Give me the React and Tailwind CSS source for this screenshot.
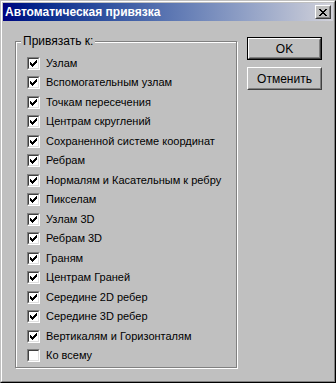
import React from 'react';

const items = [
  { label: 'Узлам', on: true, h: 'h-[20px]' },
  { label: 'Вспомогательным узлам', on: true, h: 'h-[19px]' },
  { label: 'Точкам пересечения', on: true, h: 'h-[20px]' },
  { label: 'Центрам скруглений', on: true, h: 'h-[19px]' },
  { label: 'Сохраненной системе координат', on: true, h: 'h-[20px]' },
  { label: 'Ребрам', on: true, h: 'h-[19px]' },
  { label: 'Нормалям и Касательным к ребру', on: true, h: 'h-[20px]' },
  { label: 'Пикселам', on: true, h: 'h-[19px]' },
  { label: 'Узлам 3D', on: true, h: 'h-[20px]' },
  { label: 'Ребрам 3D', on: true, h: 'h-[19px]' },
  { label: 'Граням', on: true, h: 'h-[20px]' },
  { label: 'Центрам Граней', on: true, h: 'h-[19px]' },
  { label: 'Середине 2D ребер', on: true, h: 'h-[20px]' },
  { label: 'Середине 3D ребер', on: true, h: 'h-[19px]' },
  { label: 'Вертикалям и Горизонталям', on: true, h: 'h-[20px]' },
  { label: 'Ко всему', on: false, h: 'h-[19px]' },
];

// classic 7x7 check glyph
const CHECK = [
  '......#',
  '.....##',
  '#...###',
  '##.###.',
  '#####..',
  '.###...',
  '..#....',
];

function CheckMark() {
  const rects = [];
  CHECK.forEach((row, y) => {
    row.split('').forEach((c, x) => {
      if (c === '#') rects.push(<rect key={`${x}-${y}`} x={x} y={y} width="1" height="1" />);
    });
  });
  return (
    <svg width="7" height="7" viewBox="0 0 7 7" className="block" shapeRendering="crispEdges" fill="#000">
      {rects}
    </svg>
  );
}

function Checkbox({ checked }) {
  return (
    <div className="w-[13px] h-[13px] shrink-0 border border-t-[#808080] border-l-[#808080] border-b-white border-r-white">
      <div className="w-full h-full border border-t-[#404040] border-l-[#404040] border-b-[#dfdfdf] border-r-[#dfdfdf] bg-white flex items-center justify-center">
        {checked && <CheckMark />}
      </div>
    </div>
  );
}

function Button({ children, isDefault }) {
  return (
    <div className={`w-[75px] h-[23px] ${isDefault ? 'border border-black' : ''}`}>
      <div className="w-full h-full border border-t-white border-l-white border-b-[#404040] border-r-[#404040]">
        <div className="w-full h-full border border-t-[#c0c0c0] border-l-[#c0c0c0] border-b-[#808080] border-r-[#808080] flex items-center justify-center text-[12px] text-black">
          {children}
        </div>
      </div>
    </div>
  );
}

export default function App() {
  return (
    <div
      className="w-[336px] h-[383px] border border-t-[#c0c0c0] border-l-[#c0c0c0] border-b-black border-r-black bg-[#c0c0c0]"
      style={{ fontFamily: '"Liberation Sans", Arial, sans-serif' }}
    >
      <div className="w-full h-full border border-t-white border-l-white border-b-[#808080] border-r-[#808080] p-[1px]">
        {/* title bar */}
        <div className="h-[18px] flex items-center justify-between bg-gradient-to-r from-[#000080] to-[#d2d2da]">
          <span className="pl-[2px] text-white font-bold text-[12px] leading-none">Автоматическая привязка</span>
          <div className="mr-[2px] w-[16px] h-[14px] border border-t-white border-l-white border-b-[#404040] border-r-[#404040]">
            <div className="w-full h-full border border-t-[#c0c0c0] border-l-[#c0c0c0] border-b-[#808080] border-r-[#808080] bg-[#c0c0c0] flex items-center justify-center">
              <svg width="8" height="7" viewBox="0 0 8 7" shapeRendering="crispEdges" fill="#000">
                <rect x="0" y="0" width="2" height="1" /><rect x="6" y="0" width="2" height="1" />
                <rect x="1" y="1" width="2" height="1" /><rect x="5" y="1" width="2" height="1" />
                <rect x="2" y="2" width="4" height="1" />
                <rect x="3" y="3" width="2" height="1" />
                <rect x="2" y="4" width="4" height="1" />
                <rect x="1" y="5" width="2" height="1" /><rect x="5" y="5" width="2" height="1" />
                <rect x="0" y="6" width="2" height="1" /><rect x="6" y="6" width="2" height="1" />
              </svg>
            </div>
          </div>
        </div>

        {/* body */}
        <div className="flex items-start">
          <div className="relative ml-[12px] mt-[20px] w-[222px] h-[327px] border border-[#808080] shadow-[inset_1px_1px_0_#fff,1px_1px_0_#fff]">
            <span className="absolute left-[5px] top-[-8px] px-[2px] bg-[#c0c0c0] text-[12px] leading-[14px] text-black">
              Привязать к:
            </span>
            <div className="pt-[11px] pl-[11px]">
              {items.map((it) => (
                <div key={it.label} className={`${it.h} flex items-center`}>
                  <Checkbox checked={it.on} />
                  <span className="ml-[6px] text-[11px] text-black whitespace-nowrap">{it.label}</span>
                </div>
              ))}
            </div>
          </div>
          <div className="ml-[10px] mt-[16px] flex flex-col gap-[7px]">
            <Button isDefault>OK</Button>
            <Button>Отменить</Button>
          </div>
        </div>
      </div>
    </div>
  );
}
